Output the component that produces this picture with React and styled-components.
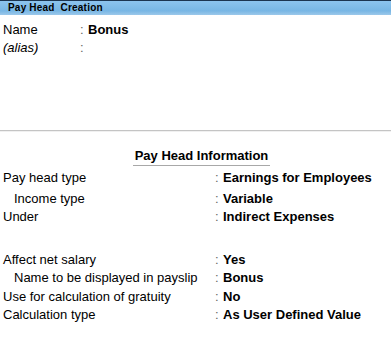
import React from "react";
import styled, { createGlobalStyle } from "styled-components";

const Global = createGlobalStyle`
  html, body { margin: 0; padding: 0; background: #fff; }
  body { font-family: "Liberation Sans", Arial, sans-serif; font-size: 13px; color: #000; }
`;

const Page = styled.div`
  width: 391px;
  height: 352px;
  overflow: hidden;
  background: #fff;
`;

const TitleBar = styled.div`
  height: 14px;
  border-top: 1px solid #1c3550;
  background: linear-gradient(#8cc4ee, #78b6e4 70%, #9cc8ea);
  font-size: 10px;
  font-weight: bold;
  line-height: 14px;
  padding-left: 8px;
  letter-spacing: 0.2px;
`;

const NameBlock = styled.div`
  padding: 6px 0 0 3px;
  height: 109px;
  border-bottom: 1px solid #c4c4c4;
  box-shadow: 0 1px 0 #f0f0f0;
`;

const Row = styled.div`
  display: grid;
  grid-template-columns: ${(p) => p.$label}px 8px auto;
  height: 18px;
  line-height: 18px;
  margin-top: ${(p) => p.$gap || 0}px;
`;

const Label = styled.span`
  padding-left: ${(p) => (p.$indent ? 11 : 0)}px;
  font-style: ${(p) => (p.$italic ? "italic" : "normal")};
  white-space: nowrap;
`;

const Colon = styled.span`
  color: #666;
`;

const Value = styled.span`
  font-weight: bold;
  white-space: nowrap;
`;

const Heading = styled.div`
  display: flex;
  justify-content: center;
  padding: 17px 0 0 12px;
`;

const HeadingText = styled.span`
  font-weight: bold;
  font-size: 13px;
  line-height: 16px;
  border-bottom: 1px solid #a8a8a8;
  padding: 0 2px 1px;
`;

const Details = styled.div`
  padding: 3px 0 0 3px;
`;

const Spacer = styled.div`
  height: 25px;
`;

const detail1 = [
  { l: "Pay head type", v: "Earnings for Employees" },
  { l: "Income type", v: "Variable", indent: true, gap: 3 },
  { l: "Under", v: "Indirect Expenses" },
];
const detail2 = [
  { l: "Affect net salary", v: "Yes" },
  { l: "Name to be displayed in payslip", v: "Bonus", indent: true },
  { l: "Use for calculation of gratuity", v: "No", gap: 1 },
  { l: "Calculation type", v: "As User Defined Value" },
];

export default function App() {
  return (
    <Page>
      <Global />
      <TitleBar>Pay Head&nbsp; Creation</TitleBar>
      <NameBlock>
        <Row $label={77}>
          <Label>Name</Label>
          <Colon>:</Colon>
          <Value>Bonus</Value>
        </Row>
        <Row $label={77}>
          <Label $italic>(alias)</Label>
          <Colon>:</Colon>
          <Value />
        </Row>
      </NameBlock>
      <Heading>
        <HeadingText>Pay Head Information</HeadingText>
      </Heading>
      <Details>
        {detail1.map((d) => (
          <Row key={d.l} $label={212} $gap={d.gap}>
            <Label $indent={d.indent}>{d.l}</Label>
            <Colon>:</Colon>
            <Value>{d.v}</Value>
          </Row>
        ))}
        <Spacer />
        {detail2.map((d) => (
          <Row key={d.l} $label={212} $gap={d.gap}>
            <Label $indent={d.indent}>{d.l}</Label>
            <Colon>:</Colon>
            <Value>{d.v}</Value>
          </Row>
        ))}
      </Details>
    </Page>
  );
}
